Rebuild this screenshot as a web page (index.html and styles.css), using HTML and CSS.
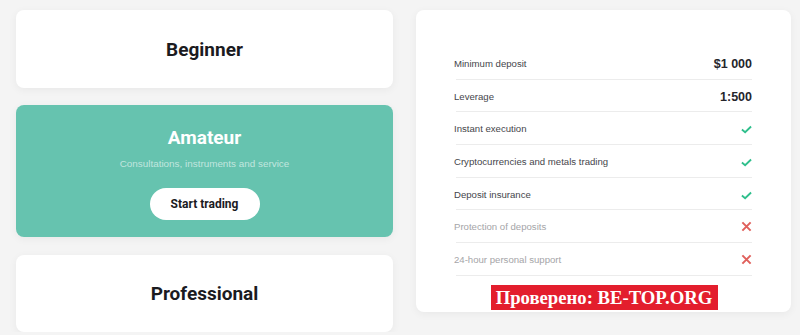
FILE: index.html
```html
<!DOCTYPE html>
<html lang="en">
<head>
    <meta charset="UTF-8">
    <title>Account types</title>
    <link rel="stylesheet" href="styles.css">
</head>
<body>

    <div class="container">
        <div class="plans">
            <div class="plan plan-small">
                <h2>Beginner</h2>
            </div>

            <div class="plan plan-active">
                <h2>Amateur</h2>
                <p>Consultations, instruments and service</p>
                <button class="btn">Start trading</button>
            </div>

            <div class="plan plan-small plan-last">
                <h2>Professional</h2>
            </div>
        </div>

        <div class="details">
            <div class="row">
                <span>Minimum deposit</span>
                <b>$1 000</b>
            </div>
            <div class="row">
                <span>Leverage</span>
                <b>1:500</b>
            </div>
            <div class="row">
                <span>Instant execution</span>
                <svg class="icon" viewBox="0 0 12 9"><path d="M1 4.5 L4.5 7.5 L11 1.2" fill="none" stroke="#2fbf8c" stroke-width="2"/></svg>
            </div>
            <div class="row">
                <span>Cryptocurrencies and metals trading</span>
                <svg class="icon" viewBox="0 0 12 9"><path d="M1 4.5 L4.5 7.5 L11 1.2" fill="none" stroke="#2fbf8c" stroke-width="2"/></svg>
            </div>
            <div class="row">
                <span>Deposit insurance</span>
                <svg class="icon" viewBox="0 0 12 9"><path d="M1 4.5 L4.5 7.5 L11 1.2" fill="none" stroke="#2fbf8c" stroke-width="2"/></svg>
            </div>
            <div class="row off">
                <span>Protection of deposits</span>
                <svg class="icon cross" viewBox="0 0 12 12"><path d="M1.5 1.5 L10.5 10.5 M10.5 1.5 L1.5 10.5" fill="none" stroke="#e0605c" stroke-width="2.2"/></svg>
            </div>
            <div class="row off">
                <span>24-hour personal support</span>
                <svg class="icon cross" viewBox="0 0 12 12"><path d="M1.5 1.5 L10.5 10.5 M10.5 1.5 L1.5 10.5" fill="none" stroke="#e0605c" stroke-width="2.2"/></svg>
            </div>

            <div class="stamp">Проверено: BE-TOP.ORG</div>
        </div>
    </div>

</body>
</html>
```

FILE: styles.css
```css
body {
    margin: 0;
    padding: 0;
    background: #f4f4f4;
    font-family: "Liberation Sans", Arial, sans-serif;
    overflow: hidden;
}

.container {
    display: flex;
    align-items: flex-start;
    gap: 23px;
    padding: 10px 9px 0 16px;
}

.plans {
    width: 377px;
    display: flex;
    flex-direction: column;
    gap: 17px;
}

.plan {
    background: #fff;
    border-radius: 8px;
    box-shadow: 0 2px 8px rgba(0, 0, 0, 0.05);
    display: flex;
    flex-direction: column;
    align-items: center;
    justify-content: center;
}

.plan h2 {
    margin: 0;
    font-family: Roboto, Arial, sans-serif;
    font-size: 19px;
    font-weight: 700;
    color: #1b1b1f;
}

.plan-small {
    height: 78px;
}

.plan-last {
    height: 77px;
    margin-top: 1px;
}

.plan-active {
    height: 132px;
    background: #66c3af;
    box-sizing: border-box;
    padding-top: 3px;
}

.plan-active h2 {
    color: #fff;
    font-size: 19px;
}

.plan-active p {
    margin: 9px 0 19px;
    font-size: 9.9px;
    color: rgba(255, 255, 255, 0.6);
}

.btn {
    width: 110px;
    height: 32px;
    border: none;
    border-radius: 16px;
    background: #fff;
    font-family: Roboto, Arial, sans-serif;
    font-size: 12px;
    font-weight: 700;
    color: #1b1b1f;
    cursor: pointer;
}

.details {
    width: 375px;
    height: 302px;
    box-sizing: border-box;
    padding: 37px 39px 0 40px;
    background: #fff;
    border-radius: 8px;
    box-shadow: 0 2px 8px rgba(0, 0, 0, 0.05);
    display: flex;
    flex-direction: column;
}

.row {
    height: 31.7px;
    border-bottom: 1px solid #ececec;
    display: flex;
    align-items: center;
    justify-content: space-between;
    font-size: 9.6px;
    color: #45454b;
}

.row span {
    margin-left: -2px;
    padding-top: 1px;
}

.row b {
    font-size: 12.5px;
    color: #25252b;
    padding-top: 2px;
}

.row.off {
    color: #a5a5a8;
}

.icon {
    width: 11px;
    height: 9px;
    margin-top: 3px;
}

.icon.cross {
    width: 11px;
    height: 11px;
    margin-top: 1px;
}

.stamp {
    align-self: center;
    margin-top: 9px;
    width: 227px;
    height: 25px;
    background: #e31e2d;
    color: #fff;
    font-family: "Liberation Serif", "Times New Roman", serif;
    font-weight: 700;
    font-size: 18.7px;
    line-height: 25px;
    text-align: center;
}
```
